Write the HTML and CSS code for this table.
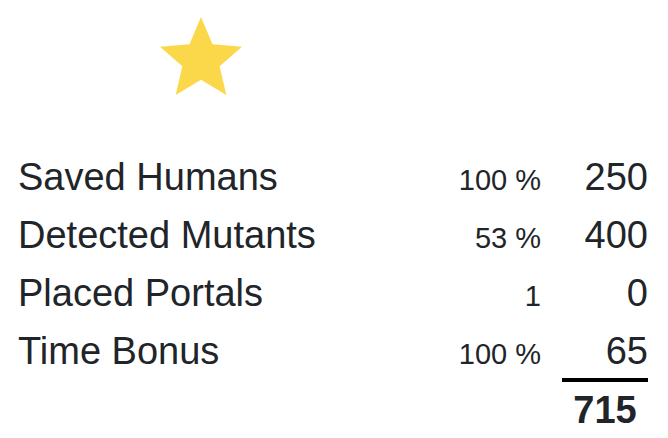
FILE: index.html
```html
<!DOCTYPE html>
<html>
<head>
<meta charset="utf-8">
<link rel="stylesheet" href="styles.css">
</head>
<body>
<div class="result">
  <div class="stars">
    <svg class="star" viewBox="2 2 20 19" width="82" height="78" aria-hidden="true">
      <path d="M12 17.27L18.18 21l-1.64-7.03L22 9.24l-7.19-.61L12 2 9.19 8.63 2 9.24l5.46 4.73L5.82 21z"/>
    </svg>
  </div>
  <table class="score">
    <tbody>
      <tr><td class="label">Saved Humans</td><td class="pct">100 %</td><td class="pts">250</td></tr>
      <tr><td class="label">Detected Mutants</td><td class="pct">53 %</td><td class="pts">400</td></tr>
      <tr><td class="label">Placed Portals</td><td class="pct">1</td><td class="pts">0</td></tr>
      <tr class="last"><td class="label">Time Bonus</td><td class="pct">100 %</td><td class="pts">65</td></tr>
      <tr class="total"><td></td><td></td><td class="sum">715</td></tr>
    </tbody>
  </table>
</div>
</body>
</html>
```

FILE: styles.css
```css
html, body {
  margin: 0;
  padding: 0;
  background: #ffffff;
}

body {
  font-family: "Liberation Sans", Arial, Helvetica, sans-serif;
  color: #212529;
}

.result {
  padding: 17px 20px 0 18px;
}

.stars {
  display: flex;
  padding-left: 142px;
  height: 138px;
}

.star {
  display: block;
  fill: #fbd84a;
}

.score {
  width: 630px;
  border-collapse: collapse;
  border-spacing: 0;
}

.score td {
  padding: 0 0 14px 0;
  vertical-align: baseline;
  line-height: 44px;
  white-space: nowrap;
}

.label {
  font-size: 38px;
  text-align: left;
}

.score td.pct {
  font-size: 29px;
  line-height: 29px;
  text-align: right;
  padding-right: 21px;
}

.pts {
  width: 86px;
  font-size: 38px;
  text-align: right;
}

.score .last td {
  padding-bottom: 5px;
}

.score .total td {
  padding: 6px 0 0 0;
}

.sum {
  border-top: 4px solid #000;
  font-size: 38px;
  font-weight: bold;
  text-align: center;
}
```
